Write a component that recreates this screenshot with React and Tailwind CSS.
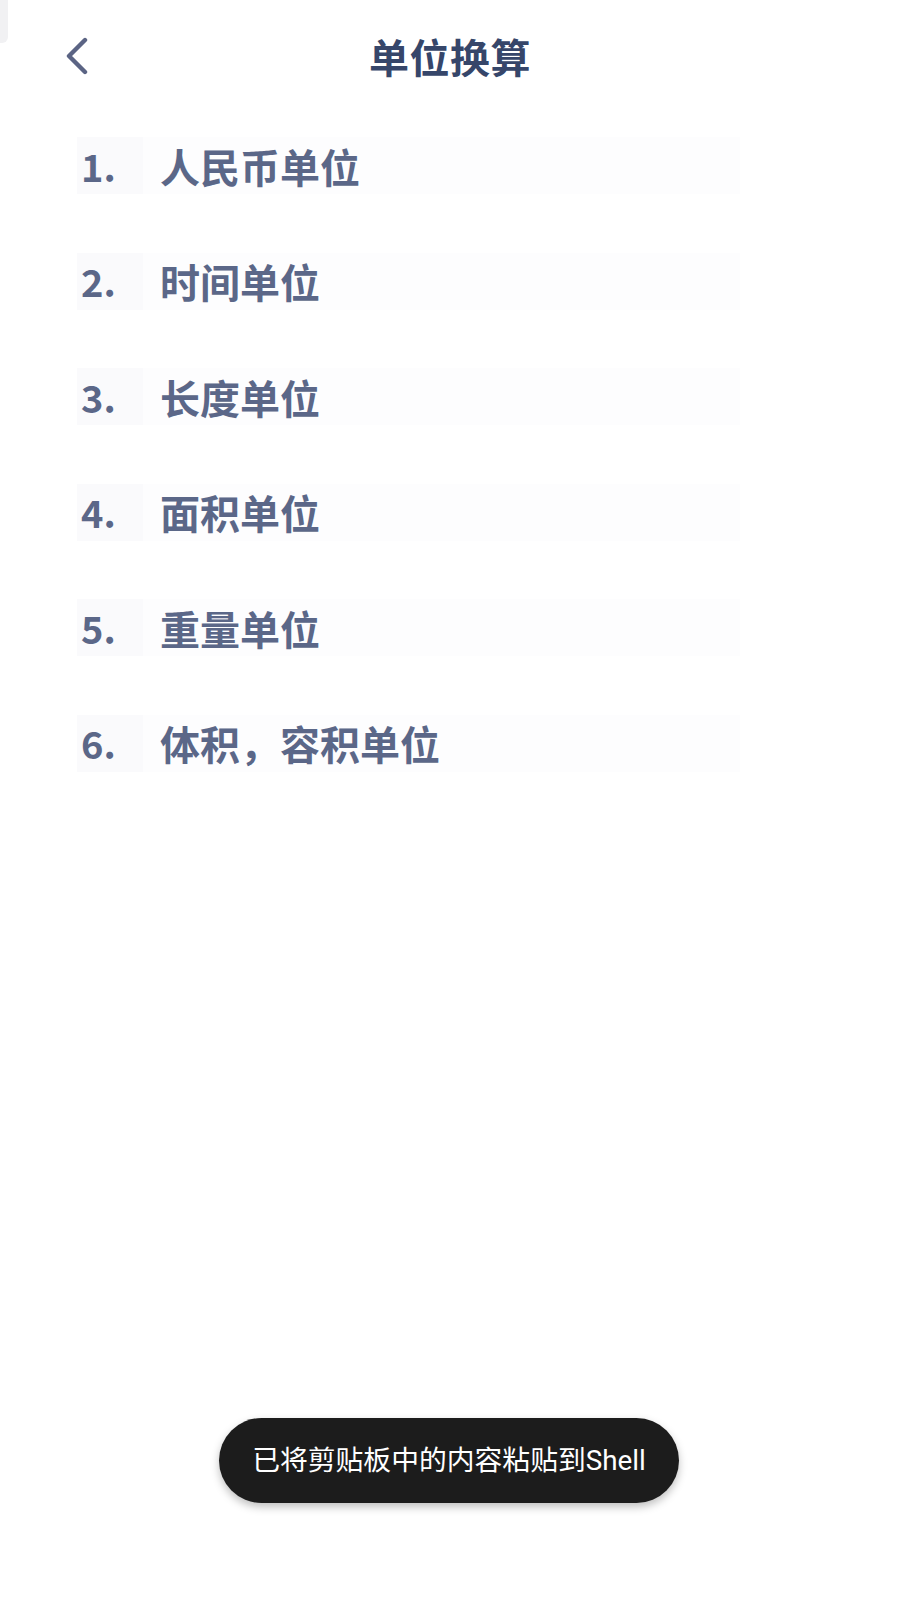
import React from "react";

const items = ["人民币单位", "时间单位", "长度单位", "面积单位", "重量单位", "体积，容积单位"];

export default function App() {
  return (
    <div
      className="relative w-[900px] h-[1600px] bg-white overflow-hidden"
      style={{ fontFamily: '"Noto Sans CJK SC", "Noto Sans", sans-serif' }}
    >
      <div className="absolute left-0 top-0 w-[8px] h-[43px] bg-[#f1f1f3] rounded-br-[6px]" />
      <header className="relative h-[112px] flex items-center justify-center">
        <button className="absolute left-[62px] top-[36px] w-[30px] h-[40px] flex items-center justify-center">
          <svg width="26" height="38" viewBox="0 0 26 38" fill="none">
            <path d="M21 3 L5 19 L21 35" stroke="#5b6484" strokeWidth="4.4" strokeLinecap="round" strokeLinejoin="round" />
          </svg>
        </button>
        <h1 className="text-[40px] font-bold text-[#36466a] leading-none tracking-[0.5px]">单位换算</h1>
      </header>
      <ul className="flex flex-col gap-[58.5px] pl-[77px] pt-[25px]">
        {items.map((t, i) => (
          <li key={i} className="flex w-[663px] h-[57px] items-center">
            <div className="w-[66px] h-full flex items-center pl-[4px] bg-[#fafafc] text-[38px] font-bold text-[#5b6788] leading-none">
              {i + 1}.
            </div>
            <div className="flex-1 h-full flex items-center pl-[17px] bg-[#fdfdfe] text-[40px] font-bold text-[#5b6788] leading-none">
              {t}
            </div>
          </li>
        ))}
      </ul>
      <div className="absolute left-[219px] top-[1418px] w-[460px] h-[85px] rounded-full bg-[#1c1c1c] shadow-[0_4px_8px_rgba(0,0,0,0.25)] flex items-center justify-center">
        <span
          className="text-white text-[27.8px] leading-none"
          style={{ fontFamily: 'Roboto, "Noto Sans CJK SC", sans-serif' }}
        >
          已将剪贴板中的内容粘贴到Shell
        </span>
      </div>
    </div>
  );
}
